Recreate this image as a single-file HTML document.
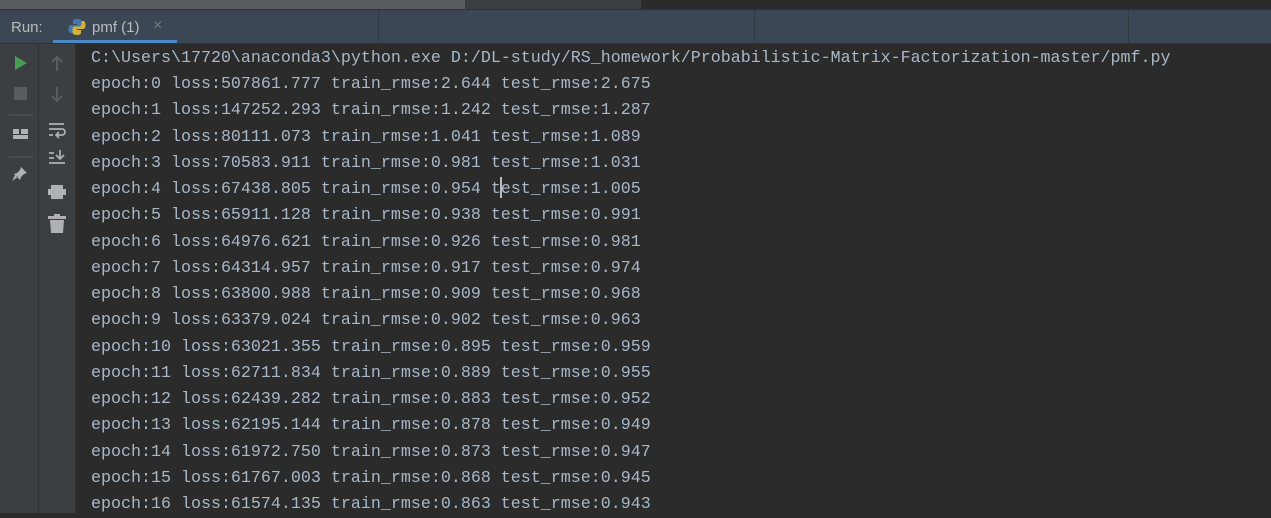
<!DOCTYPE html>
<html><head><meta charset="utf-8"><style>
html,body{margin:0;padding:0;width:1271px;height:513px;overflow:hidden;background:#2b2b2b;font-family:"Liberation Sans",sans-serif}
.a{position:absolute}
.con{position:absolute;left:91px;top:46px;font-family:"Liberation Mono",monospace;font-size:16.66px;color:#a9b7c6;line-height:26.24px;white-space:pre}
</style></head><body>
<div class="a" style="left:0;top:0;width:465px;height:9px;background:#595b5d"></div>
<div class="a" style="left:465px;top:0;width:176px;height:9px;background:#3c3f41"></div>
<div class="a" style="left:641px;top:0;width:630px;height:9px;background:#2b2b2b"></div>
<div class="a" style="left:0;top:9px;width:1271px;height:34px;background:#3b4754;border-top:1px solid #323232"></div>
<div class="a" style="left:378px;top:10px;width:1px;height:33px;background:#323a44"></div>
<div class="a" style="left:754px;top:10px;width:1px;height:33px;background:#323a44"></div>
<div class="a" style="left:1128px;top:10px;width:1px;height:33px;background:#323a44"></div>
<div class="a" style="left:11px;top:19px;font-size:15px;color:#bbbbbb">Run:</div>
<svg class="a" style="left:68px;top:18px" width="18" height="18" viewBox="0 0 18 18"><path d="M9 1c-4 0-4 1.5-4 3v2h4v1H3c-2 0-2.5 2-2.5 4s.5 4 2 4h2v-3c0-1.5 1-2.5 2.5-2.5h4c1.5 0 2.5-1 2.5-2.5V4c0-1.5-1-3-4.5-3z" fill="#3e7ab3"/><path d="M9 17c4 0 4-1.5 4-3v-2H9v-1h6c2 0 2.5-2 2.5-4s-.5-4-2-4h-2v3c0 1.5-1 2.5-2.5 2.5h-4C5.5 8.5 4.5 9.5 4.5 11v3c0 1.5 1 3 4.5 3z" fill="#d3b337"/></svg>
<div class="a" style="left:92px;top:19px;font-size:15px;color:#bbbbbb">pmf (1)</div>
<div class="a" style="left:153px;top:17px;font-size:16px;color:#7a7e82">×</div>
<div class="a" style="left:53px;top:40px;width:124px;height:3px;background:#4a88c7"></div>
<div class="a" style="left:0;top:43px;width:1271px;height:1px;background:#323232"></div>
<div class="a" style="left:0;top:44px;width:38px;height:469px;background:#3c3f41;border-right:1px solid #323232"></div>
<div class="a" style="left:39px;top:44px;width:36px;height:469px;background:#3c3f41;border-right:1px solid #323232"></div>
<svg class="a" style="left:0;top:44px" width="76" height="200" viewBox="0 0 76 200">
<path d="M15 12v14l12-7z" fill="#499c54"/>
<rect x="14" y="43" width="13" height="13" fill="#5a5d60"/>
<line x1="9" y1="71" x2="33" y2="71" stroke="#505357"/>
<rect x="13" y="85" width="6" height="5" fill="#afb1b3"/><rect x="21" y="85" width="7" height="5" fill="#afb1b3"/><rect x="13" y="91" width="15" height="4" fill="#afb1b3"/>
<line x1="9" y1="113" x2="33" y2="113" stroke="#505357"/>
<path d="M21 123l6 6-3 1-3 3-1 3-6-6 3-1 3-3z M15 131l-3 6 6-4z" fill="#afb1b3"/>
<path d="M57 13v14M52 18l5-5 5 5" stroke="#5a5d60" stroke-width="2" fill="none"/>
<path d="M57 43v14M52 52l5 5 5-5" stroke="#5a5d60" stroke-width="2" fill="none"/>
<path d="M49 80h15M49 85h13a3 3 0 0 1 0 6h-5M59 88l-3 3 3 3M49 91h4" stroke="#afb1b3" stroke-width="1.7" fill="none"/>
<path d="M49 109h5M49 114h5M49 119h16M60 106v9M56 111l4 4 4-4" stroke="#afb1b3" stroke-width="1.7" fill="none"/>
<rect x="51" y="141" width="12" height="4" fill="#afb1b3"/><rect x="48" y="145" width="18" height="6" fill="#afb1b3"/><rect x="51" y="151" width="12" height="4" fill="#afb1b3"/>
<rect x="48" y="172" width="18" height="3" fill="#afb1b3"/><rect x="54" y="170" width="6" height="2" fill="#afb1b3"/><path d="M50 176h14l-1 13h-12z" fill="#afb1b3"/>
</svg>
<div class="con">C:\Users\17720\anaconda3\python.exe D:/DL-study/RS_homework/Probabilistic-Matrix-Factorization-master/pmf.py
epoch:0 loss:507861.777 train_rmse:2.644 test_rmse:2.675
epoch:1 loss:147252.293 train_rmse:1.242 test_rmse:1.287
epoch:2 loss:80111.073 train_rmse:1.041 test_rmse:1.089
epoch:3 loss:70583.911 train_rmse:0.981 test_rmse:1.031
epoch:4 loss:67438.805 train_rmse:0.954 test_rmse:1.005
epoch:5 loss:65911.128 train_rmse:0.938 test_rmse:0.991
epoch:6 loss:64976.621 train_rmse:0.926 test_rmse:0.981
epoch:7 loss:64314.957 train_rmse:0.917 test_rmse:0.974
epoch:8 loss:63800.988 train_rmse:0.909 test_rmse:0.968
epoch:9 loss:63379.024 train_rmse:0.902 test_rmse:0.963
epoch:10 loss:63021.355 train_rmse:0.895 test_rmse:0.959
epoch:11 loss:62711.834 train_rmse:0.889 test_rmse:0.955
epoch:12 loss:62439.282 train_rmse:0.883 test_rmse:0.952
epoch:13 loss:62195.144 train_rmse:0.878 test_rmse:0.949
epoch:14 loss:61972.750 train_rmse:0.873 test_rmse:0.947
epoch:15 loss:61767.003 train_rmse:0.868 test_rmse:0.945
epoch:16 loss:61574.135 train_rmse:0.863 test_rmse:0.943</div>
<div class="a" style="left:500px;top:177px;width:2px;height:21px;background:#bbbbbb"></div>
</body></html>
